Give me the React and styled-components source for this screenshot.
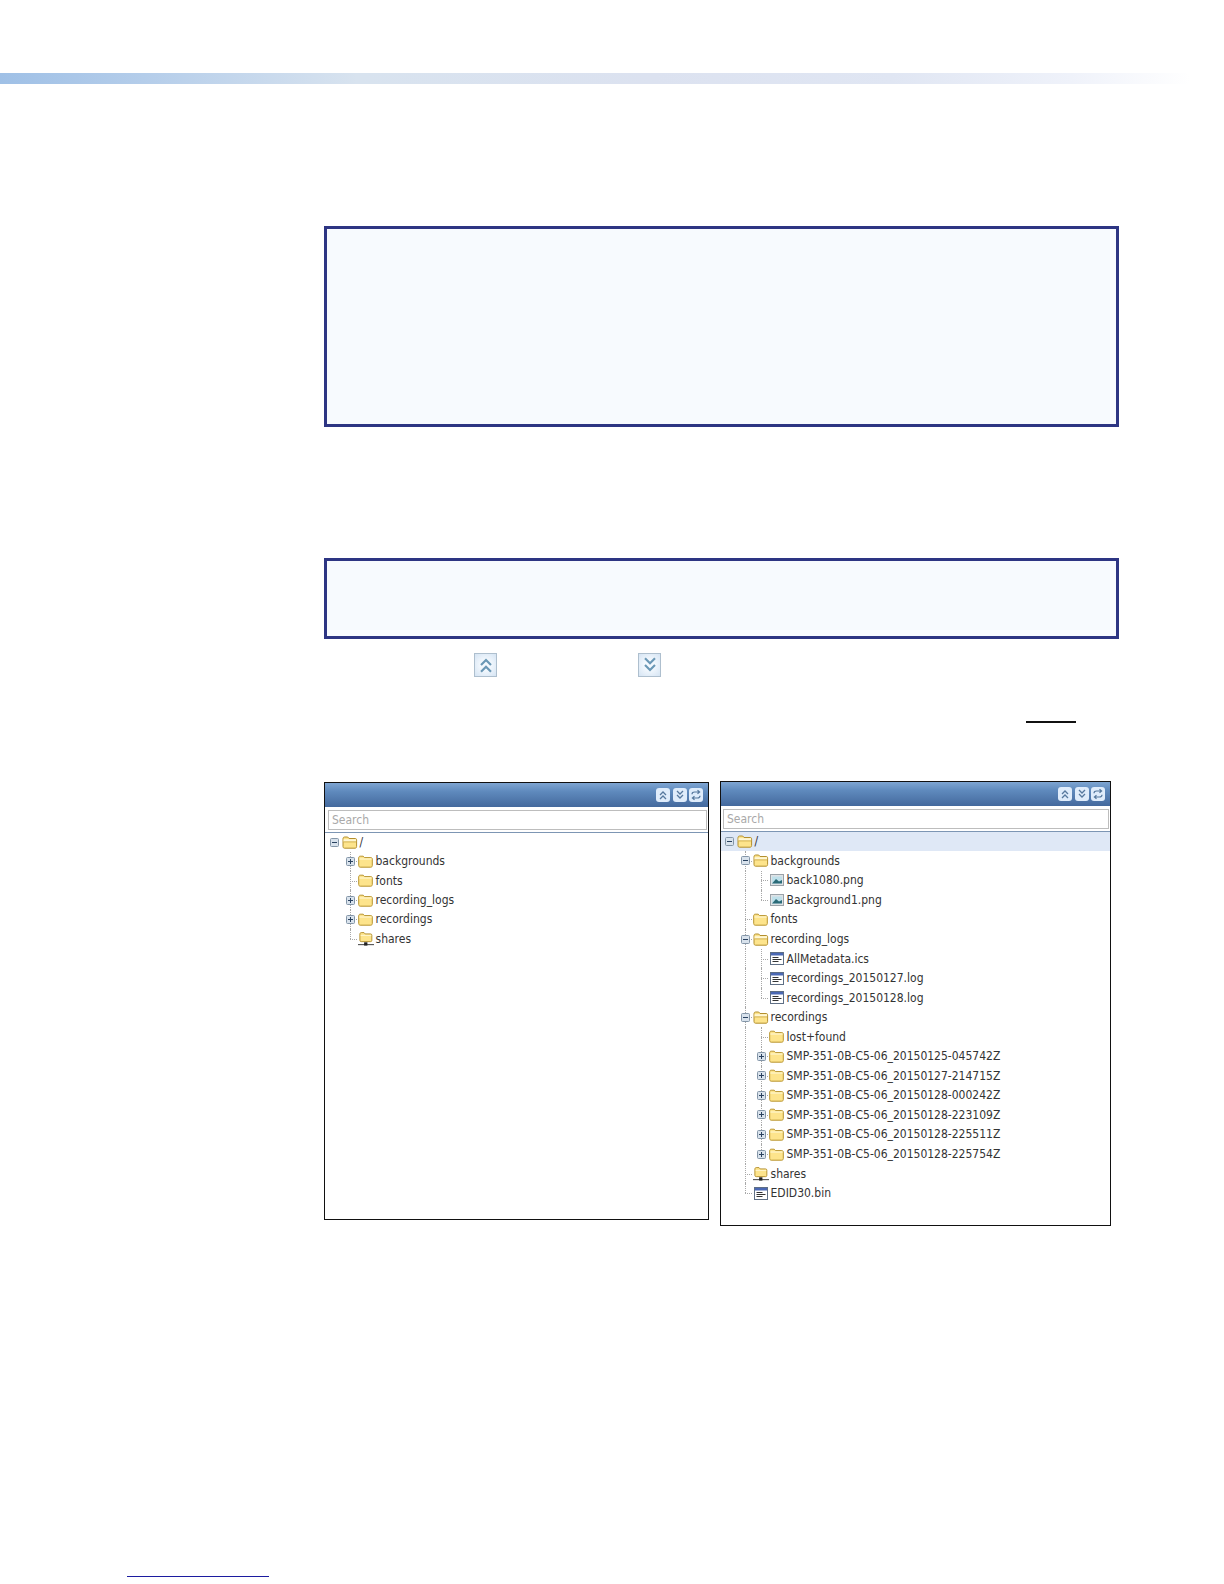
import React from "react";
import styled, { createGlobalStyle } from "styled-components";

const Global = createGlobalStyle`
  html, body { margin: 0; padding: 0; background: #fff; }
  body { font-family: "DejaVu Sans", "Noto Sans", sans-serif; }
`;

const Page = styled.div`
  width: 1224px;
  height: 1584px;
  overflow: hidden;
  padding-top: 73px;
  box-sizing: border-box;
`;

const TopBand = styled.div`
  width: 1190px;
  height: 11px;
  background: linear-gradient(90deg, #9fc0e6 0%, #b4cdea 12%, #d8e3ef 30%, #dce2f0 55%, #e0e6f3 75%, #eff2fa 90%, #ffffff 100%);
`;

const Content = styled.div`
  margin-left: 324px;
  width: 795px;
  padding-top: 142px;
`;

const NoteBox = styled.div`
  box-sizing: border-box;
  width: 795px;
  height: ${(p) => p.$h}px;
  margin-bottom: ${(p) => p.$mb}px;
  border: 3px solid #2d3583;
  background: #f7fafe;
`;

const IconLine = styled.div`
  display: flex;
  gap: 141px;
  margin: 14px 0 0 150px;
  height: 24px;
`;

const PageButton = styled.div`
  width: 23px;
  height: 24px;
  display: flex;
  align-items: center;
  justify-content: center;
  background: radial-gradient(circle, #f4f9fe 30%, #d5e4f3 100%);
  border: 1px solid #aebfce;
  box-sizing: border-box;
  color: #6b98b6;
`;

const RuleLine = styled.div`
  width: 50px;
  height: 1.5px;
  background: #111;
  margin: 44px 0 0 702px;
`;

const Panels = styled.div`
  display: flex;
  align-items: flex-start;
  gap: 11px;
  margin-top: 58.5px;
`;

const Panel = styled.div`
  box-sizing: border-box;
  flex: none;
  width: ${(p) => p.$w}px;
  height: ${(p) => p.$h}px;
  margin-top: ${(p) => p.$top}px;
  border: 1.5px solid #111;
  background: #fff;
`;

const PanelHeader = styled.div`
  height: 24px;
  display: flex;
  align-items: center;
  justify-content: flex-end;
  gap: 2.5px;
  padding-right: 5px;
  background: linear-gradient(180deg, #7ea5d2 0%, #5f8abd 35%, #44699d 100%);
`;

const ToolButton = styled.div`
  width: 14px;
  height: 14px;
  border-radius: 3px;
  background: #dfecfb;
  display: flex;
  align-items: center;
  justify-content: center;
  color: #57799e;
`;

const SearchRow = styled.div`
  padding: 2.5px 1.5px 2px ${(p) => p.$left}px;
  border-bottom: 1px solid #7d96b4;
`;

const SearchBox = styled.div`
  box-sizing: border-box;
  height: 20px;
  border: 1.5px solid #bdbdbd;
  padding-left: 3px;
  font-size: 12px;
  font-stretch: condensed;
  line-height: 19px;
  color: #a9a9a9;
  background: #fff;
`;

const Tree = styled.div`
  padding-top: ${(p) => p.$pt}px;
`;

const Row = styled.div`
  display: flex;
  align-items: center;
  height: ${(p) => p.$h}px;
  padding-left: ${(p) => p.$pad}px;
  background: ${(p) => (p.$active ? "#dfe8f6" : "transparent")};
  font-size: 12px;
  font-stretch: condensed;
  color: #333;
  white-space: nowrap;
`;

const guideBase = `
  position: relative;
  flex: none;
  align-self: stretch;
  display: flex;
  align-items: center;
`;

const Indent = styled.span`
  ${guideBase}
  width: 16px;
  &::before {
    content: "";
    position: absolute;
    left: 4px;
    top: 0;
    bottom: 0;
    border-left: ${(p) => (p.$kind === "line" ? "1px dotted #a8a8a8" : "none")};
  }
`;

const Toggle = styled.span`
  ${guideBase}
  width: 12px;
  &::before {
    content: "";
    position: absolute;
    left: 4px;
    top: 0;
    bottom: ${(p) => (p.$kind === "end" ? "50%" : "0")};
    border-left: ${(p) => (p.$kind ? "1px dotted #a8a8a8" : "none")};
  }
  &::after {
    content: "";
    position: absolute;
    left: 4px;
    right: 1px;
    top: 50%;
    border-top: ${(p) => (p.$kind ? "1px dotted #a8a8a8" : "none")};
  }
`;

const ToggleMark = styled.span`
  position: relative;
  z-index: 1;
  display: flex;
`;

const IconSlot = styled.span`
  flex: none;
  width: 16px;
  margin-right: 2px;
  display: flex;
  align-items: center;
  justify-content: center;
`;

const Label = styled.span`
  display: block;
  line-height: 1;
`;

const ChevUp = ({ s = 12 }) => (
  <svg width={s} height={s} viewBox="0 0 12 12" fill="none" stroke="currentColor" strokeWidth="1.3">
    <path d="M3 6l3-3 3 3M3 10l3-3 3 3" />
  </svg>
);
const ChevDown = ({ s = 12 }) => (
  <svg width={s} height={s} viewBox="0 0 12 12" fill="none" stroke="currentColor" strokeWidth="1.3">
    <path d="M3 2l3 3 3-3M3 6l3 3 3-3" />
  </svg>
);
const Refresh = () => (
  <svg width="12" height="12" viewBox="0 0 12 12" fill="none" stroke="currentColor" strokeWidth="1.2">
    <path d="M2 5.2C2 3.6 3 3 4.500 3H9M7.500 1.200L9.600 3 7.500 4.800M10 6.800C10 8.400 9 9 7.500 9H3M4.500 7.200L2.400 9l2.100 1.800" />
  </svg>
);

const Box = ({ open }) => (
  <svg width="9" height="9" viewBox="0 0 9 9">
    <rect x=".5" y=".5" width="8" height="8" rx="1" fill="#d8e2ec" stroke="#8496a8" />
    <path d={open ? "M2 4.500h5" : "M2 4.500h5M4.500 2v5"} stroke="#2a4260" strokeWidth="1" />
  </svg>
);

const Folder = ({ state }) => {
  if (state === "open")
    return (
      <svg width="16" height="13" viewBox="0 0 16 13">
        <path d="M1 10.500V2.800C1 1.800 1.600 1 2.500 1h3.200L7 2.500h6.300c.8 0 1.300.6 1.300 1.300v6.700c0 1-.6 1.700-1.500 1.700H2.500C1.600 12.200 1 11.500 1 10.500z" fill="#fde48c" stroke="#b38f2e" />
        <path d="M1.500 3.200h12.600v2.400H1.500z" fill="#fff7d4" />
        <path d="M1.500 5.900h12.800" stroke="#c9a33e" strokeWidth=".8" />
      </svg>
    );
  return (
    <svg width="15" height="13" viewBox="0 0 15 13">
      <path d="M.7 10.500V2.900C.7 1.900 1.300 1.200 2.200 1.200h3L6.500 2.600h6.300c.9 0 1.500.6 1.500 1.500v6.400c0 1-.6 1.700-1.500 1.700H2.200C1.300 12.200.7 11.500.7 10.500z" fill="#fde48c" stroke="#b8942f" />
      <path d="M1.400 4h12.200" stroke="#fff6cf" strokeWidth="1.200" />
    </svg>
  );
};

const Shared = () => (
  <svg width="17" height="16" viewBox="0 0 17 16">
    <path d="M2 9.500V2.800C2 1.900 2.600 1.200 3.400 1.200h3L7.600 2.600h5.800c.8 0 1.300.5 1.300 1.300v5.600c0 .8-.5 1.300-1.300 1.300H3.400C2.600 10.800 2 10.300 2 9.500z" fill="#fde48c" stroke="#b38f2e" />
    <path d="M2.800 4.200h11.200" stroke="#fff6cf" />
    <path d="M0 14h17" stroke="#333" />
    <rect x="6.500" y="11.500" width="3.500" height="3.500" fill="#222" />
  </svg>
);

const Picture = () => (
  <svg width="14" height="12" viewBox="0 0 14 12">
    <rect x=".5" y=".5" width="13" height="11" fill="#dfe3e6" stroke="#9aa2a8" />
    <rect x="2" y="2.500" width="10" height="7" fill="#bfe0ea" />
    <path d="M2 9.500L6 5l3 2.500 3-1.500v3.500z" fill="#2a6b78" />
  </svg>
);

const TextFile = () => (
  <svg width="14" height="13" viewBox="0 0 14 13">
    <rect x=".5" y=".5" width="13" height="12" fill="#fff" stroke="#5f6f85" />
    <rect x="1" y="1" width="12" height="2.500" fill="#4a68b4" />
    <path d="M2.500 5.500h6M2.500 7.500h9M2.500 9.500h6" stroke="#333" />
  </svg>
);

const icons = {
  open: <Folder state="open" />,
  folder: <Folder />,
  shared: <Shared />,
  image: <Picture />,
  text: <TextFile />,
};

const TreeRow = ({ h, pad, guides, kind, toggle, icon, text, active }) => (
  <Row $h={h} $pad={pad} $active={active}>
    {guides.map((g, i) => (
      <Indent key={i} $kind={g} />
    ))}
    <Toggle $kind={kind}>
      {toggle ? (
        <ToggleMark>
          <Box open={toggle === "open"} />
        </ToggleMark>
      ) : null}
    </Toggle>
    <IconSlot>{icons[icon]}</IconSlot>
    <Label>{text}</Label>
  </Row>
);

const leftRows = [
  { guides: [], toggle: "open", icon: "open", text: "/" },
  { guides: ["none"], kind: "line", toggle: "closed", icon: "folder", text: "backgrounds" },
  { guides: ["none"], kind: "line", icon: "folder", text: "fonts" },
  { guides: ["none"], kind: "line", toggle: "closed", icon: "folder", text: "recording_logs" },
  { guides: ["none"], kind: "line", toggle: "closed", icon: "folder", text: "recordings" },
  { guides: ["none"], kind: "end", icon: "shared", text: "shares" },
];

const stamp = ["20150125-045742Z", "20150127-214715Z", "20150128-000242Z", "20150128-223109Z", "20150128-225511Z", "20150128-225754Z"];

const rightRows = [
  { guides: [], toggle: "open", icon: "open", text: "/", active: true },
  { guides: ["none"], kind: "line", toggle: "open", icon: "open", text: "backgrounds" },
  { guides: ["none", "line"], kind: "line", icon: "image", text: "back1080.png" },
  { guides: ["none", "line"], kind: "end", icon: "image", text: "Background1.png" },
  { guides: ["none"], kind: "line", icon: "folder", text: "fonts" },
  { guides: ["none"], kind: "line", toggle: "open", icon: "open", text: "recording_logs" },
  { guides: ["none", "line"], kind: "line", icon: "text", text: "AllMetadata.ics" },
  { guides: ["none", "line"], kind: "line", icon: "text", text: "recordings_20150127.log" },
  { guides: ["none", "line"], kind: "end", icon: "text", text: "recordings_20150128.log" },
  { guides: ["none"], kind: "line", toggle: "open", icon: "open", text: "recordings" },
  { guides: ["none", "line"], kind: "line", icon: "folder", text: "lost+found" },
  ...stamp.map((s, i) => ({
    guides: ["none", "line"],
    kind: i === stamp.length - 1 ? "end" : "line",
    toggle: "closed",
    icon: "folder",
    text: `SMP-351-0B-C5-06_${s}`,
  })),
  { guides: ["none"], kind: "line", icon: "shared", text: "shares" },
  { guides: ["none"], kind: "end", icon: "text", text: "EDID30.bin" },
];

const FileTree = ({ rows, h, pt, pad }) => (
  <Tree $pt={pt}>
    {rows.map((r) => (
      <TreeRow key={r.text + r.guides.length} h={h} pad={pad} {...r} />
    ))}
  </Tree>
);

const FilePanel = ({ w, ph, top, rows, rowH, pt, pad, searchLeft }) => (
  <Panel $w={w} $h={ph} $top={top}>
    <PanelHeader>
      <ToolButton><ChevUp /></ToolButton>
      <ToolButton><ChevDown /></ToolButton>
      <ToolButton><Refresh /></ToolButton>
    </PanelHeader>
    <SearchRow $left={searchLeft}>
      <SearchBox>Search</SearchBox>
    </SearchRow>
    <FileTree rows={rows} h={rowH} pt={pt} pad={pad} />
  </Panel>
);

const FootLine = styled.div`
  width: 142px;
  height: 1.5px;
  background: #1c1ca0;
  margin: 349.5px 0 0 127px;
`;

export default function App() {
  return (
    <Page>
      <Global />
      <TopBand />
      <Content>
        <NoteBox $h={201} $mb={131} />
        <NoteBox $h={81} $mb={0} />
        <IconLine>
          <PageButton><ChevUp s={20} /></PageButton>
          <PageButton><ChevDown s={20} /></PageButton>
        </IconLine>
        <RuleLine />
        <Panels>
          <FilePanel w={385} ph={437.5} top={1} rows={leftRows} rowH={19.3} pt={0} pad={4.5} searchLeft={3} />
          <FilePanel w={391} ph={445} top={0} rows={rightRows} rowH={19.55} pt={0} pad={3.5} searchLeft={2} />
        </Panels>
      </Content>
      <FootLine />
    </Page>
  );
}
